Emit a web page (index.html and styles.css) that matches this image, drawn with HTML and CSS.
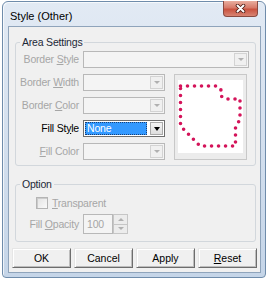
FILE: index.html
```html
<!DOCTYPE html>
<html lang="en">
<head>
    <meta charset="UTF-8">
    <meta name="viewport" content="width=device-width, initial-scale=1.0">
    <title>Style (Other)</title>
    <link rel="stylesheet" href="styles.css">
</head>
<body>
    <div class="window">
        <div class="titlebar">
            <span class="title">Style (Other)</span>
            <span class="close-btn">
                <svg width="11" height="9" viewBox="0 0 11 9">
                    <path d="M2.5 1.5 L8.5 7.5 M8.5 1.5 L2.5 7.5" stroke="#4a1a12" stroke-width="3.6" stroke-linecap="round"/>
                    <path d="M2.5 1.5 L8.5 7.5 M8.5 1.5 L2.5 7.5" stroke="#fff" stroke-width="2" stroke-linecap="round"/>
                </svg>
            </span>
        </div>
        <div class="client">
            <fieldset class="group area">
                <legend>Area Settings</legend>
                <div class="area-grid">
                    <span class="lbl disabled">Border <u>S</u>tyle</span>
                    <div class="combo wide"><span class="combo-text"></span><span class="drop"><i class="arrow"></i></span></div>

                    <span class="lbl disabled">Border <u>W</u>idth</span>
                    <div class="combo"><span class="combo-text"></span><span class="drop"><i class="arrow"></i></span></div>

                    <div class="preview">
                        <div class="preview-inner">
                            <svg width="65" height="73" viewBox="178 80 65 73">
                                <path d="M180.5 86 H217 L221 90 V96 L226 99 H240 V119 L235.5 128 V146 H200 L180.5 126 Z"
                                      fill="none" stroke="#d4145a" stroke-width="3.6" stroke-linecap="round" stroke-dasharray="0 7"/>
                            </svg>
                        </div>
                    </div>

                    <span class="lbl disabled">Border <u>C</u>olor</span>
                    <div class="combo"><span class="combo-text"></span><span class="drop"><i class="arrow"></i></span></div>

                    <span class="lbl">Fill St<u>y</u>le</span>
                    <div class="combo active"><span class="combo-text selected">None</span><span class="drop"><i class="arrow"></i></span></div>

                    <span class="lbl disabled"><u>F</u>ill Color</span>
                    <div class="combo"><span class="combo-text"></span><span class="drop"><i class="arrow"></i></span></div>
                </div>
            </fieldset>

            <fieldset class="group option">
                <legend>Option</legend>
                <div class="check-row">
                    <span class="checkbox"></span>
                    <span class="disabled"><u>T</u>ransparent</span>
                </div>
                <div class="opacity-row">
                    <span class="lbl disabled">Fill <u>O</u>pacity</span>
                    <div class="spin">
                        <span class="spin-value">100</span>
                        <span class="spin-btns">
                            <span><i class="tri-up"></i></span>
                            <span><i class="tri-down"></i></span>
                        </span>
                    </div>
                </div>
            </fieldset>

            <div class="buttons">
                <button class="btn">OK</button>
                <button class="btn">Cancel</button>
                <button class="btn">Apply</button>
                <button class="btn"><u>R</u>eset</button>
            </div>
        </div>
    </div>
</body>
</html>
```

FILE: styles.css
```css
body {
    margin: 0;
    padding-top: 1px;
    background-color: #fff;
    font-family: "Liberation Sans", Arial, sans-serif;
    font-size: 10.5px;
    letter-spacing: -0.2px;
    color: #000;
}
.window {
    box-sizing: border-box;
    width: 264px;
    margin-left: 2px;
    padding: 0 4px 4px 5px;
    border: 1px solid #6f8cab;
    border-radius: 6px 6px 4px 4px;
    background: linear-gradient(#e2eaf4, #c5d5e8);
    box-shadow: inset 1px 1px 0 rgba(255,255,255,0.7);
}
.titlebar {
    display: flex;
    height: 24px;
}
.title {
    margin: 7px 0 0 2px;
    font-size: 11px;
    letter-spacing: 0;
    line-height: 14px;
}
.close-btn {
    box-sizing: border-box;
    display: flex;
    align-items: center;
    justify-content: center;
    width: 35px;
    height: 16px;
    margin: -1px 3px 0 auto;
    border: 1px solid #8a4a40;
    border-top: none;
    border-radius: 0 0 4px 4px;
    background: linear-gradient(#e9ae9f, #d77a69 45%, #c9523f 55%, #d88573);
}
.client {
    padding: 9px 4px 4px 6px;
    border: 1px solid #8fa4bb;
    background-color: #f0f0f0;
}
.group {
    min-width: 0;
    margin: 0;
    border: 1px solid #d2d7dc;
    border-radius: 3px;
}
.group legend {
    margin-left: 4px;
    padding: 0 2px;
    line-height: 12px;
    color: #1d2838;
}
.area {
    padding: 3px 6px 5px 0;
}
.area-grid {
    display: grid;
    grid-template-columns: 67px 82px 84px;
    grid-auto-rows: 17px;
    row-gap: 6px;
}
.lbl {
    padding-right: 4px;
    text-align: right;
    line-height: 17px;
    white-space: nowrap;
}
.disabled {
    color: #a6a6a6;
}
.combo {
    box-sizing: border-box;
    display: flex;
    border: 1px solid #b8b8b8;
    background-color: #f4f4f4;
}
.combo.wide {
    grid-column: 2 / 4;
}
.combo-text {
    flex: 1;
}
.drop {
    display: flex;
    align-items: center;
    justify-content: center;
    width: 11px;
    margin: 1px;
    border: 1px solid #d3d3d3;
    background-color: #f0f0f0;
}
.arrow {
    border-left: 3px solid transparent;
    border-right: 3px solid transparent;
    border-top: 3px solid #b0b0b0;
}
.combo.active {
    border-color: #6e6e6e;
    background-color: #fff;
}
.combo-text.selected {
    margin: 1px 2px 1px 1px;
    padding-left: 2px;
    line-height: 13px;
    color: #fff;
    background-color: #3399ff;
    outline: 1px dotted #1b3f73;
    outline-offset: -1px;
}
.combo.active .drop {
    border-color: #a9a9a9;
    background: linear-gradient(#f4f4f4, #dedede);
}
.combo.active .arrow {
    border-left-width: 3.5px;
    border-right-width: 3.5px;
    border-top: 4px solid #000;
}
.preview {
    box-sizing: border-box;
    grid-column: 3;
    grid-row: 2 / span 4;
    width: 73px;
    margin-left: 9px;
    padding: 5px 3px 6px 3px;
    border: 1px solid #c8c8c8;
    background-color: #ececec;
}
.preview-inner {
    height: 100%;
    background-color: #fff;
}
.preview-inner svg {
    display: block;
}
.option {
    margin-top: 12px;
    padding: 6px 6px 7px 0;
}
.check-row {
    display: flex;
    align-items: center;
    gap: 4px;
    height: 14px;
    padding-left: 20px;
}
.checkbox {
    box-sizing: border-box;
    width: 12px;
    height: 12px;
    border: 1px solid #b4b4b4;
    background: linear-gradient(135deg, #e2e2e2, #fafafa);
    box-shadow: inset 1px 1px 0 #cbcbcb;
}
.opacity-row {
    display: grid;
    grid-template-columns: 67px auto;
    height: 20px;
    margin-top: 4px;
}
.opacity-row .lbl {
    line-height: 20px;
}
.spin {
    display: flex;
    height: 20px;
}
.spin-value {
    box-sizing: border-box;
    width: 30px;
    padding-left: 3px;
    border: 1px solid #b8b8b8;
    line-height: 18px;
    color: #a6a6a6;
    background-color: #f4f4f4;
}
.spin-btns {
    display: flex;
    flex-direction: column;
    width: 15px;
}
.spin-btns span {
    display: flex;
    flex: 1;
    align-items: center;
    justify-content: center;
    border: 1px solid #c6c6c6;
    background-color: #ececec;
}
.spin-btns span + span {
    border-top: none;
}
.tri-up {
    border-left: 3px solid transparent;
    border-right: 3px solid transparent;
    border-bottom: 3px solid #b0b0b0;
}
.tri-down {
    border-left: 3px solid transparent;
    border-right: 3px solid transparent;
    border-top: 3px solid #b0b0b0;
}
.buttons {
    display: grid;
    grid-template-columns: repeat(4, 1fr);
    column-gap: 3px;
    margin: 6px -1px 0 -3px;
}
.btn {
    height: 20px;
    padding: 0;
    font: inherit;
    color: #000;
    background-color: #f0f0f0;
    border: 1px solid;
    border-color: #e6e6e6 #6d6d6d #6d6d6d #e6e6e6;
    box-shadow: inset 1px 1px 0 #fff, inset -1px -1px 0 #bdbdbd;
}
```
